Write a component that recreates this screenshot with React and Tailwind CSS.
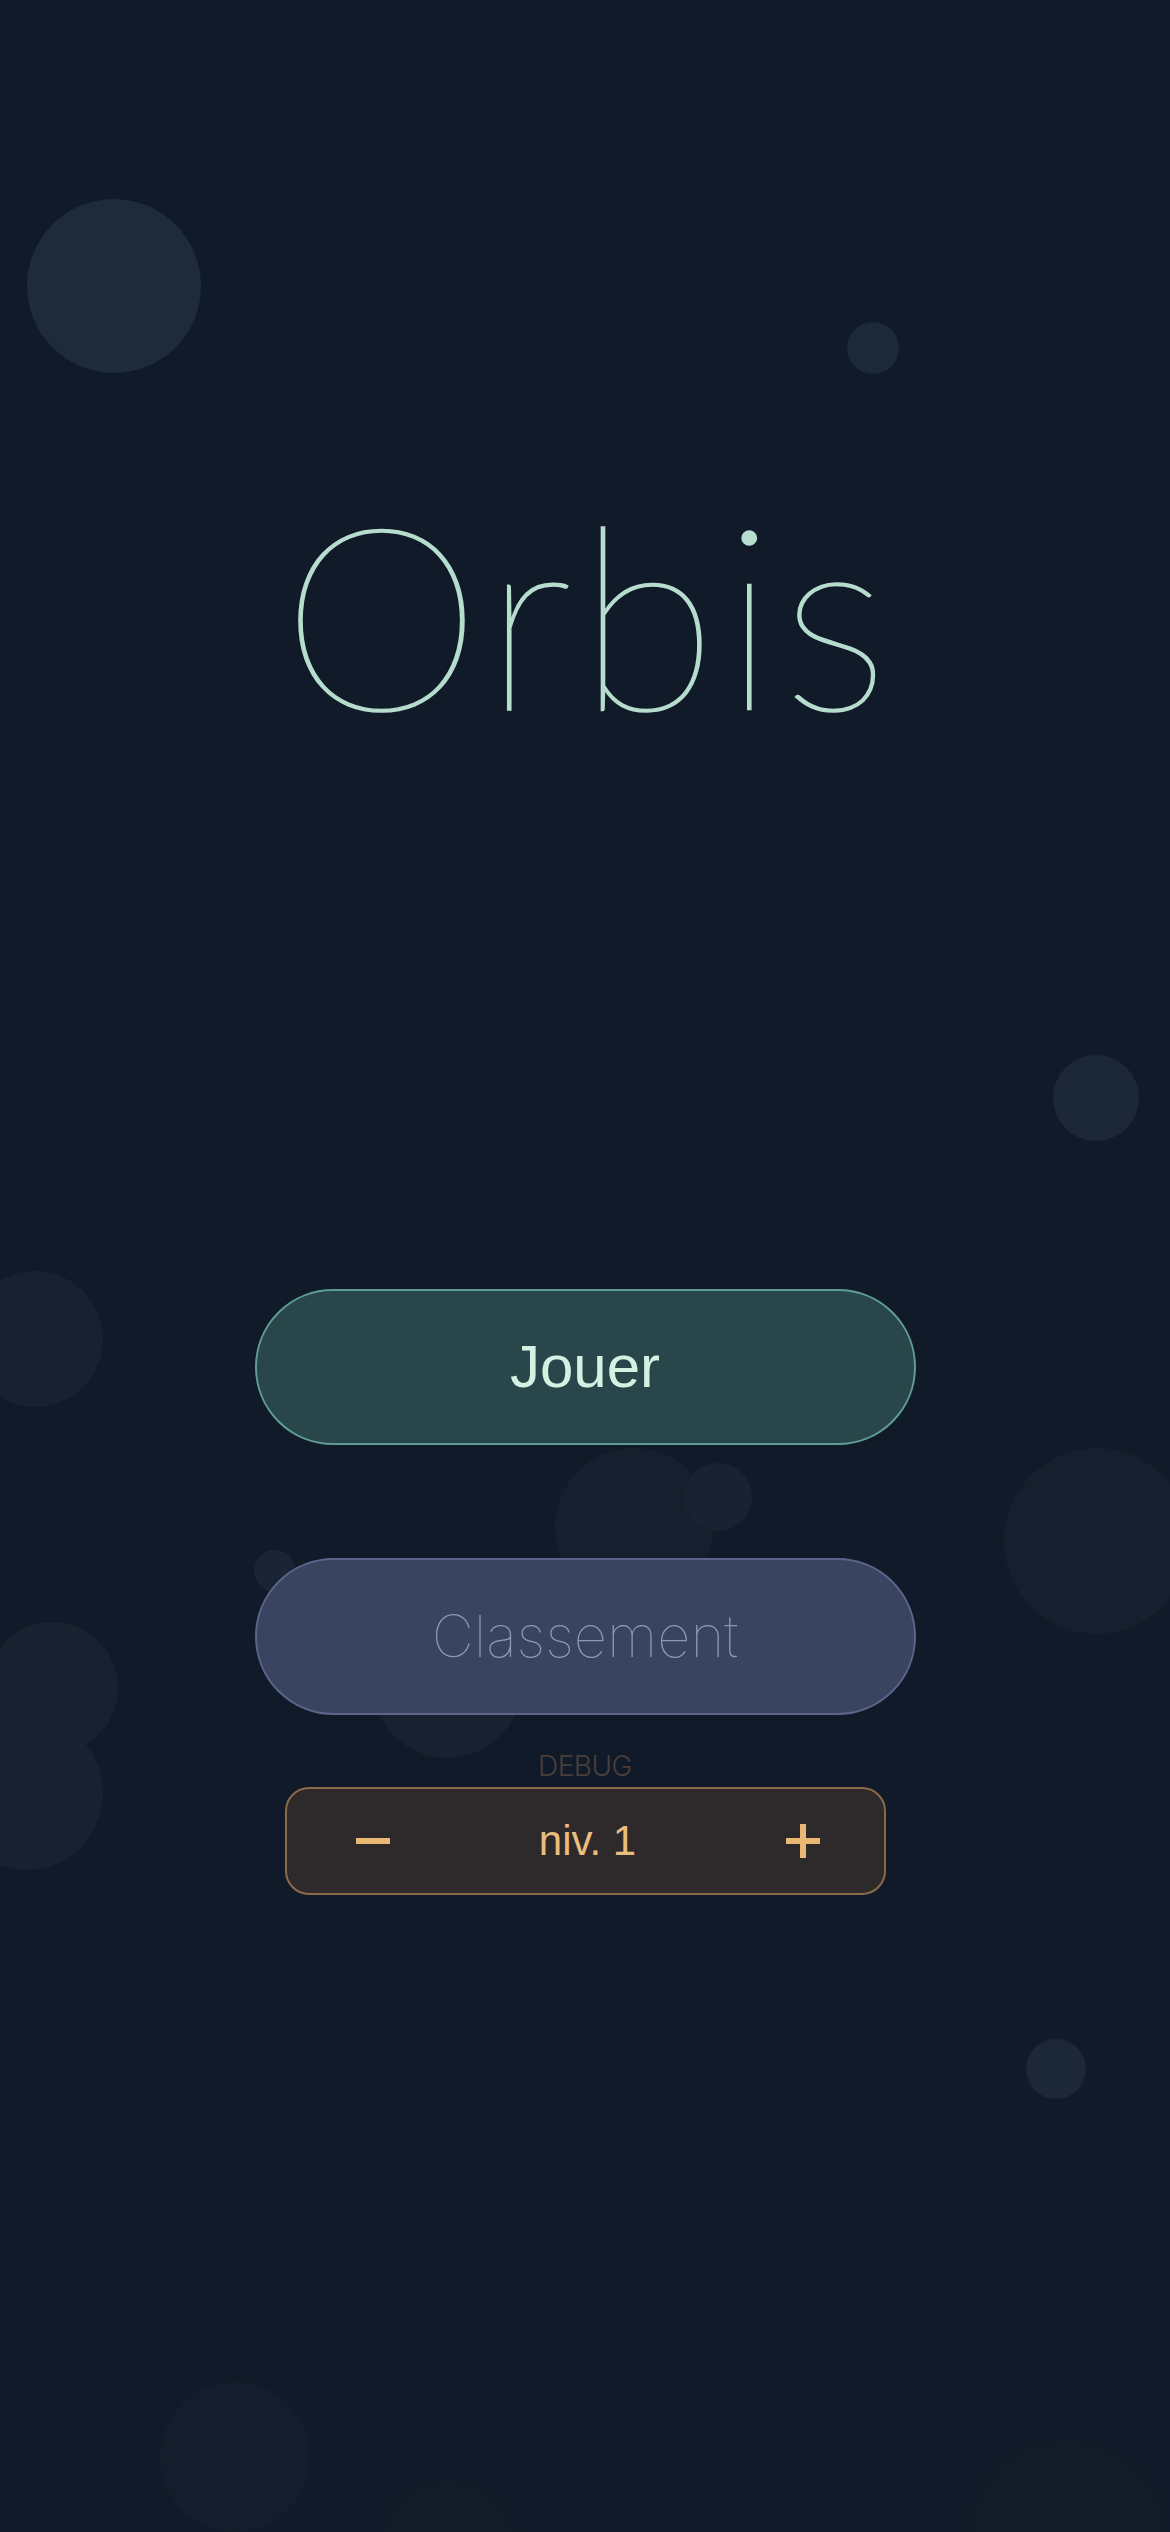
import { useState } from 'react'

// decorative orbs floating behind the menu
const orbs = [
  { x: 114, y: 286, r: 87, c: 'bg-[#1d2b3b]' },
  { x: 873, y: 348, r: 26, c: 'bg-[#1c2939]' },
  { x: 1096, y: 1098, r: 43, c: 'bg-[#1c2838]' },
  { x: 35, y: 1339, r: 68, c: 'bg-[#182130]' },
  { x: 634, y: 1527, r: 79, c: 'bg-[#161f2d]' },
  { x: 718, y: 1497, r: 34, c: 'bg-[#1a2231]' },
  { x: 1097, y: 1541, r: 93, c: 'bg-[#161f2d]' },
  { x: 275, y: 1571, r: 21, c: 'bg-[#1a2434]' },
  { x: 52, y: 1688, r: 66, c: 'bg-[#18212f]' },
  { x: 447, y: 1683, r: 75, c: 'bg-[#18212f]' },
  { x: 26, y: 1793, r: 77, c: 'bg-[#172130]' },
  { x: 1056, y: 2069, r: 30, c: 'bg-[#1c2838]' },
  { x: 235, y: 2457, r: 75, c: 'bg-[#141d2b]' },
  { x: 448, y: 2547, r: 67, c: 'bg-[#131b29]' },
  { x: 1067, y: 2537, r: 97, c: 'bg-[#131b29]' },
]

export default function App() {
  const [level, setLevel] = useState(1)

  return (
    <div className="relative w-[1170px] h-[2532px] overflow-hidden bg-[#111a29] font-['Liberation_Sans',Arial,sans-serif]">
      {orbs.map((o, i) => (
        <div
          key={i}
          className={`absolute rounded-full ${o.c}`}
          style={{ left: o.x - o.r, top: o.y - o.r, width: o.r * 2, height: o.r * 2 }}
        />
      ))}

      <div className="relative flex flex-col items-center">
        {/* Title */}
        <h1 className="mt-[441px] h-[340px] pl-[6px] text-[255px] leading-[340px] font-extralight tracking-[6px] text-[#b6ddcd] [-webkit-text-stroke:1.5px_#b6ddcd] font-['Lato','Inter',sans-serif]">
          Orbis
        </h1>

        {/* Menu */}
        <div className="mt-[508px] flex flex-col items-center">
          <button className="w-[661px] h-[156px] rounded-full border-2 border-[#5f9c95] bg-[#29474a] text-[60px] text-[#d3f2e2]">
            Jouer
          </button>
          <button className="mt-[113px] w-[661px] h-[157px] rounded-full border-2 border-[#59668a] bg-[#3a4461] text-[58px] font-thin text-[#8e98b8] font-['Inter',sans-serif]">
            Classement
          </button>

          <div className="mt-[34px] text-[28px] leading-[34px] font-light text-[#483f38] font-['Inter',sans-serif] tracking-[-0.5px]">
            DEBUG
          </div>

          <div className="mt-[4px] w-[601px] h-[108px] rounded-[24px] border-2 border-[#8b6a4a] bg-[#2e2a2c] flex items-center justify-between pl-[69px] pr-[64px] text-[#ebbd7d]">
            <button onClick={() => setLevel(Math.max(1, level - 1))} className="w-[34px] h-[40px] flex items-center justify-center">
              <svg width="34" height="6" viewBox="0 0 34 6">
                <rect width="34" height="6" fill="#e9b873" />
              </svg>
            </button>
            <span className="text-[42px] leading-none">niv. {level}</span>
            <button onClick={() => setLevel(level + 1)} className="w-[34px] h-[40px] flex items-center justify-center">
              <svg width="34" height="34" viewBox="0 0 34 34">
                <rect x="0" y="14" width="34" height="6" fill="#e9b873" />
                <rect x="14" y="0" width="6" height="34" fill="#e9b873" />
              </svg>
            </button>
          </div>
        </div>
      </div>
    </div>
  )
}
